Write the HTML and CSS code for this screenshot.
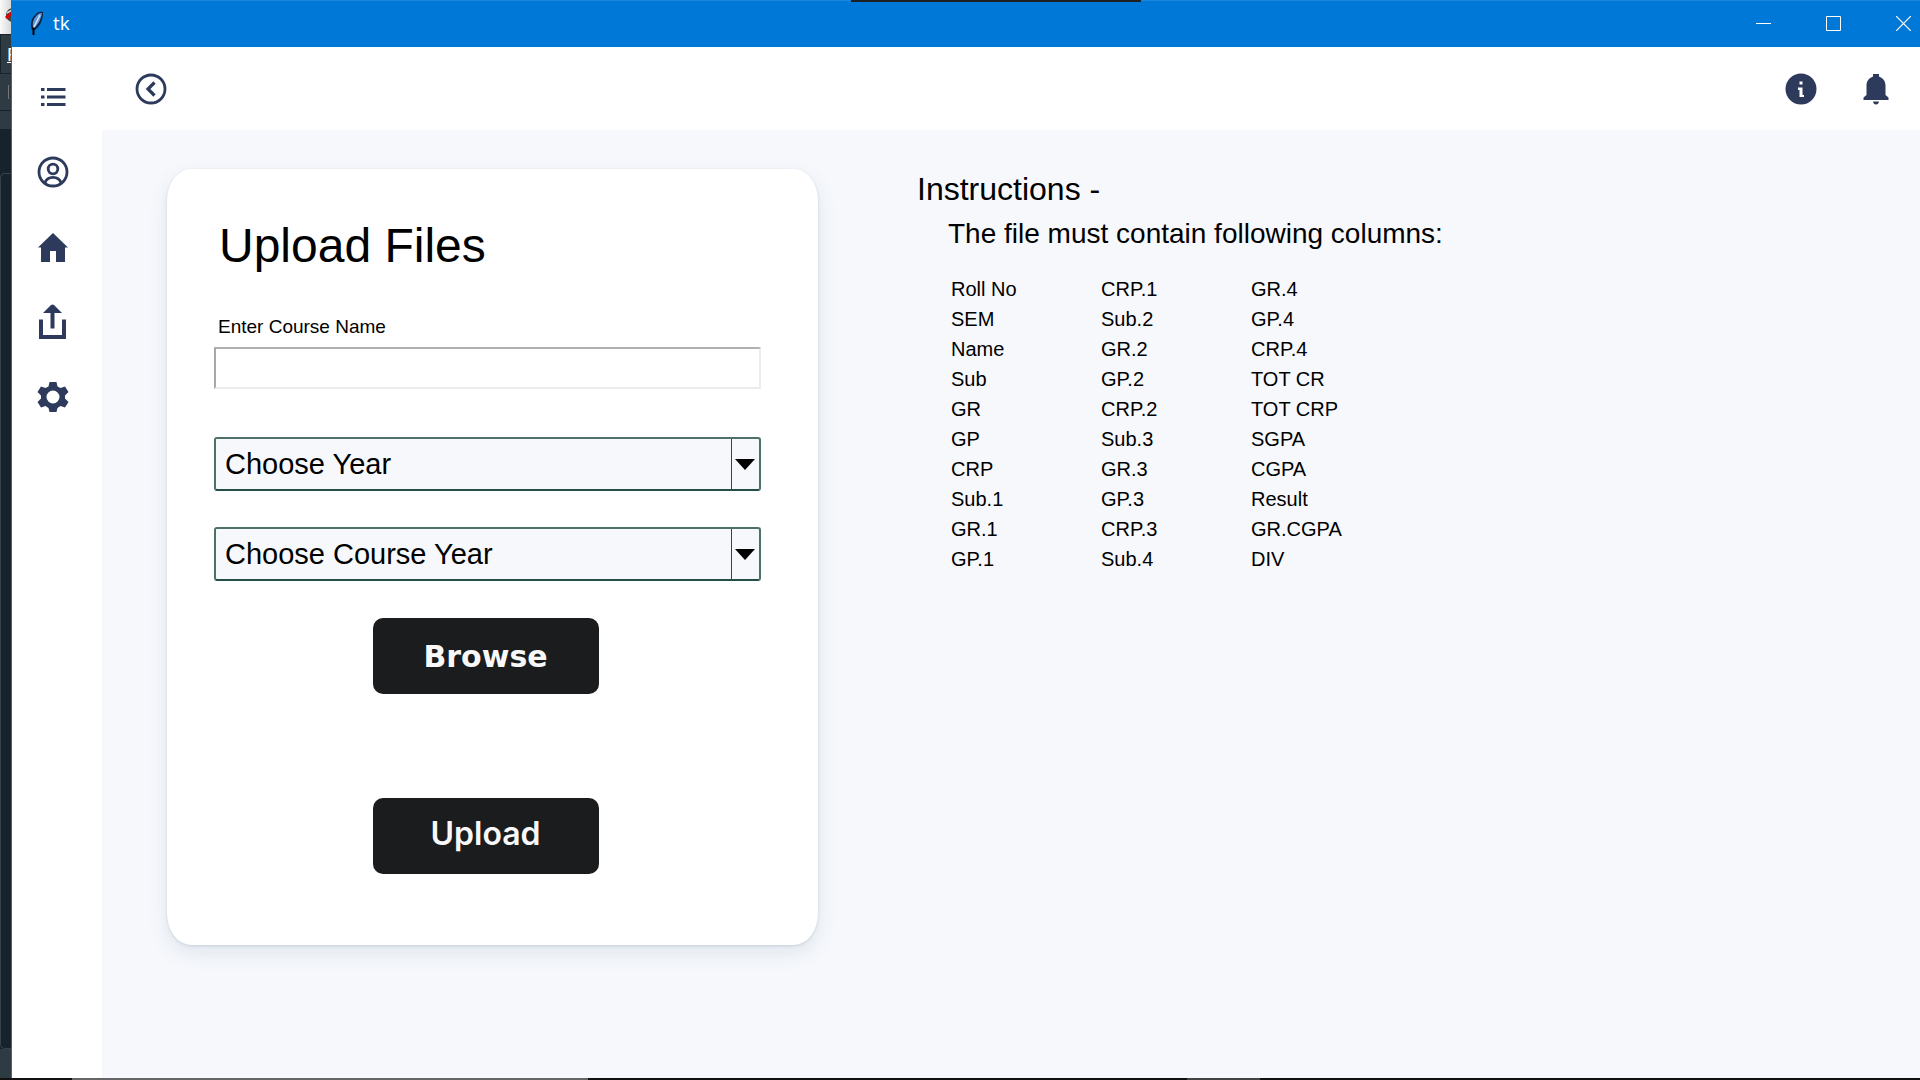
FILE: index.html
```
<!DOCTYPE html>
<html lang="en">
<head>
<meta charset="utf-8">
<title>tk</title>
<link rel="stylesheet" href="styles.css">
</head>
<body>
<div class="desktop">
  <div class="behind" aria-hidden="true">
    <div class="behind-title"><svg width="11" height="34" viewBox="0 0 11 34"><circle cx="13" cy="15" r="7" fill="#444"/><path d="M6 18l6-5" stroke="#e00000" stroke-width="3"/><path d="M7 13l5-3" stroke="#ddd" stroke-width="1.500"/></svg></div>
    <div class="behind-menu">F</div>
    <div class="behind-tool"><span></span></div>
    <div class="behind-tab"></div>
    <div class="behind-code"><div></div></div>
    <div class="behind-status"></div>
  </div>
  <div class="window">
    <header class="titlebar">
      <svg class="feather" width="16" height="26" viewBox="0 0 16 26"><path d="M3 20C1 15 2 10 5 6C8 2 11 1 14 2C14 9 12 15 6 20Z" fill="#10203a"/><path d="M4 17C3 12 5 8 8 5C10 3 12 3 13 3C12 9 10 14 5 18Z" fill="#5d94dc"/><path d="M5 17L11 5" stroke="#d3e5fa" stroke-width="1.500"/><path d="M4.500 25V18" stroke="#000" stroke-width="2"/></svg>
      <span class="title">tk</span>
      <div class="controls">
        <button aria-label="Minimize"><svg width="15" height="15" viewBox="0 0 15 15"><path d="M0 7.500h15" stroke="#fff"/></svg></button>
        <button aria-label="Maximize"><svg width="15" height="15" viewBox="0 0 15 15"><path d="M.5.5h14v14H.5z" fill="none" stroke="#fff"/></svg></button>
        <button aria-label="Close"><svg width="15" height="15" viewBox="0 0 15 15"><path d="M0 0l15 15M15 0L0 15" stroke="#fff" stroke-width="1.200"/></svg></button>
      </div>
    </header>
    <div class="body">
      <nav class="sidebar">
        <button aria-label="Menu"><svg width="32" height="36" viewBox="0 0 32 36"><path d="M4 10.500h3.500M10 10.500h18.500M4 18h3.500M10 18h18.500M4 25.500h3.500M10 25.500h18.500" stroke="#2d3a5c" stroke-width="2.800"/></svg></button>
        <button aria-label="Profile"><svg width="32" height="36" viewBox="0 0 32 36" fill="none" stroke="#2d3a5c" stroke-width="2.800"><circle cx="16" cy="18" r="14"/><circle cx="16" cy="15" r="4.800"/><path d="M8 29C10 21.500 22 21.500 24 29"/></svg></button>
        <button aria-label="Home"><svg width="32" height="36" viewBox="0 0 32 36"><path d="M16 4L31 18.500H28V33H19V22H13V33H4V18.500H1Z" fill="#2d3a5c"/></svg></button>
        <button aria-label="Upload"><svg width="32" height="36" viewBox="0 0 32 36"><path d="M4 15.500V33H27V15.500" fill="none" stroke="#2d3a5c" stroke-width="4"/><path d="M15.500 24.500V6" stroke="#2d3a5c" stroke-width="4"/><path d="M6 9L14 1Q15.500 0 17 1L25 9Z" fill="#2d3a5c"/></svg></button>
        <button aria-label="Settings"><svg width="32" height="36" viewBox="0 0 32 36"><path fill="#2d3a5c" fill-rule="evenodd" d="M12.500 3h7l1 4.500 3 1.500 4.500-1.500L31.500 13 28 16.500v3L31.500 23 28 28.500 23.500 27l-3 2-1 4h-7l-1-4-3-2L4 28.500.5 23 4 19.500v-3L.5 13 4 7.500 8.500 9l3-1.500ZM16 11.500a6.500 6.500 0 1 0 0 13 6.500 6.500 0 0 0 0-13Z"/></svg></button>
      </nav>
      <div class="main">
        <div class="toolbar">
          <button aria-label="Back"><svg width="32" height="32" viewBox="0 0 32 32" fill="none" stroke="#2d3a5c"><circle cx="16" cy="16" r="14" stroke-width="2.800"/><path d="M19.500 9.500L13 16L19.500 22.500" stroke-width="3.200"/></svg></button>
          <div class="toolbar-right">
            <button aria-label="Information"><svg width="32" height="32" viewBox="0 0 32 32"><circle cx="16" cy="16" r="15.500" fill="#2d3a5c"/><path d="M14.500 8.500h3v3h-3zM13 14.500h4.500v7.500h1.500v2h-4.500v-7H13z" fill="#fff"/></svg></button>
            <button aria-label="Notifications"><svg width="32" height="32" viewBox="0 0 32 32"><path d="M13 1h6v2.500c4 1.500 6.500 4.500 6.500 9V22l3 2.500V27h-25v-2.500l3-2.500v-9.500c0-4.500 2.500-7.500 6.500-9ZM13 28.500h6q-.5 3-3 3t-3-3Z" fill="#2d3a5c"/></svg></button>
          </div>
        </div>
        <main class="content">
          <form class="card">
            <h1>Upload Files</h1>
            <label class="name-label" for="course">Enter Course Name</label>
            <input class="name-input" id="course" type="text">
            <div class="combo">
              <select aria-label="Choose Year"><option>Choose Year</option></select>
              <svg class="arrow" width="28" height="50" viewBox="0 0 28 50"><path d="M.5 0v50" stroke="#234f47"/><path d="M4 20h20L14 31z"/></svg>
            </div>
            <div class="combo">
              <select aria-label="Choose Course Year"><option>Choose Course Year</option></select>
              <svg class="arrow" width="28" height="50" viewBox="0 0 28 50"><path d="M.5 0v50" stroke="#234f47"/><path d="M4 20h20L14 31z"/></svg>
            </div>
            <button type="button" class="action browse">Browse</button>
            <button type="button" class="action upload">Upload</button>
          </form>
          <section class="instructions">
            <h2>Instructions -</h2>
            <h3>The file must contain following columns:</h3>
            <div class="columns">
              <ul><li>Roll No</li><li>SEM</li><li>Name</li><li>Sub</li><li>GR</li><li>GP</li><li>CRP</li><li>Sub.1</li><li>GR.1</li><li>GP.1</li></ul>
              <ul><li>CRP.1</li><li>Sub.2</li><li>GR.2</li><li>GP.2</li><li>CRP.2</li><li>Sub.3</li><li>GR.3</li><li>GP.3</li><li>CRP.3</li><li>Sub.4</li></ul>
              <ul><li>GR.4</li><li>GP.4</li><li>CRP.4</li><li>TOT CR</li><li>TOT CRP</li><li>SGPA</li><li>CGPA</li><li>Result</li><li>GR.CGPA</li><li>DIV</li></ul>
            </div>
          </section>
        </main>
      </div>
    </div>
  </div>
  <div class="top-strip"></div>
  <div class="taskbar-edge"></div>
</div>
</body>
</html>
```
FILE: styles.css
```
* { box-sizing: border-box; }
body {
  margin: 0;
  font-family: "Liberation Sans", Arial, sans-serif;
  color: #000;
}
h1, h2, h3, ul { margin: 0; padding: 0; font-weight: 400; }
ul { list-style: none; }
button { border: 0; padding: 0; background: none; font-family: inherit; }
svg { display: block; }

.desktop {
  position: relative;
  display: grid;
  grid-template-columns: 11px 1fr;
  min-height: 100vh;
  overflow: hidden;
}

/* sliver of the editor window behind */
.behind { display: flex; flex-direction: column; background: #2f3b43; overflow: hidden; }
.behind-title { height: 34px; background: linear-gradient(90deg, #fafafa, #d8d8d8); }
.behind-menu {
  height: 40px;
  padding: 10px 0 0 6px;
  border: 1px solid #18222b;
  border-right: 0;
  font-size: 19px;
  line-height: 20px;
  color: #fff;
  text-decoration: underline;
}
.behind-tool { height: 37px; padding: 11px 0 0 8px; border-bottom: 1px solid #18222b; }
.behind-tool span { display: block; width: 1px; height: 14px; background: #777; }
.behind-tab { height: 18px; }
.behind-code { flex: 1; padding-top: 44px; background: #18222b; display: flex; }
.behind-code div { flex: 1; border: 1px solid #34424b; border-right: 0; border-radius: 5px 0 0 5px; }
.behind-status { height: 31px; }

.window { display: flex; flex-direction: column; border-left: 1px solid #0078d7; background: #fff; }
.titlebar {
  display: flex;
  align-items: center;
  height: 47px;
  padding: 0 9px 2px 17px;
  background: #0078d7;
  border-top: 1px solid #1a85db;
  color: #fff;
}
.title { margin-left: 8px; font: 19px/24px "Open Sans", sans-serif; }
.controls { display: flex; gap: 55px; margin-left: auto; }

.body { display: flex; flex: 1; }
.sidebar {
  display: flex;
  flex-direction: column;
  align-items: center;
  gap: 39px;
  width: 90px;
  padding: 32px 9px 0 0;
}
.main { display: flex; flex: 1; flex-direction: column; }
.toolbar {
  display: flex;
  align-items: center;
  justify-content: space-between;
  height: 83px;
  padding: 0 28px 0 33px;
}
.toolbar-right { display: flex; gap: 43px; }
.content {
  display: flex;
  flex: 1;
  align-items: flex-start;
  gap: 99px;
  padding: 39px 64px 64px 65px;
  background: #f6f8fc;
}

.card {
  display: flex;
  flex-direction: column;
  width: 651px;
  padding: 49px 57px 71px 47px;
  border-radius: 24px / 32px;
  background: #fff;
  box-shadow: 0 8px 20px rgba(70, 110, 130, .12), 0 1px 3px rgba(70, 110, 130, .2);
}
.card h1 { padding-left: 5px; font-size: 48px; line-height: 56px; }
.name-label { margin: 41px 0 8px 4px; font-size: 19px; line-height: 24px; }
.name-input {
  height: 42px;
  margin-bottom: 12px;
  border: 2px solid;
  border-color: #b0b0b0 #ececec #ececec #a8a8a8;
  padding: 0 8px;
  font: 19px "Liberation Sans", sans-serif;
}
.combo { position: relative; margin-top: 36px; }
.combo select {
  display: block;
  width: 100%;
  height: 54px;
  padding: 0 36px 0 9px;
  border: 2px solid #4d7069;
  border-bottom-color: #234f47;
  border-radius: 3px;
  appearance: none;
  background: #f6f8fc;
  color: #000;
  font: 29px "Liberation Sans", sans-serif;
}
.arrow { position: absolute; top: 2px; right: 2px; pointer-events: none; }
.action {
  align-self: center;
  width: 226px;
  height: 76px;
  margin-right: 4px;
  border-radius: 10px;
  background: #1b1c1e;
  color: #f8f8f8;
}
.browse { margin-top: 37px; font: 700 30px "DejaVu Sans", sans-serif; }
.upload { margin-top: 104px; padding-bottom: 6px; font: 600 32px Inter, sans-serif; }

.instructions { padding-top: 2px; }
.instructions h2 { font-size: 32px; line-height: 36px; }
.instructions h3 { padding: 11px 0 0 31px; font-size: 28px; line-height: 32px; }
.columns {
  display: grid;
  grid-template-columns: repeat(3, 150px);
  padding: 24px 0 0 34px;
  font-size: 20px;
  line-height: 30px;
}

/* edges of system windows peeking over the screen border */
.top-strip { position: absolute; top: 0; left: 44.300%; width: 290px; height: 2px; background: #1c2126; }
.taskbar-edge {
  position: absolute;
  right: 0;
  bottom: 0;
  left: 0;
  height: 2px;
  background: linear-gradient(90deg, #111 72px, #666 72px, #666 588px, #111 588px, #111 1187px, #444 1187px, #444 1260px, #111 1260px);
}
```
